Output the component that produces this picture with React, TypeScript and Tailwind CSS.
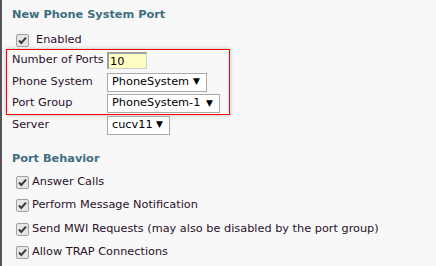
import React from "react";

const font = { fontFamily: '"DejaVu Sans", Verdana, sans-serif' };

function Check() {
  return (
    <svg width="13" height="13" viewBox="0 0 13 13" className="shrink-0">
      <rect x="0.5" y="0.5" width="12" height="12" rx="1.5" fill="#e6e6e6" stroke="#a0a0a0" />
      <path d="M3 6.5 L5.3 9 L10 3.6" fill="none" stroke="#3a3a3a" strokeWidth="2" />
    </svg>
  );
}

function Select({ label, w }: { label: string; w: string }) {
  return (
    <div className={`flex items-center justify-between h-[19px] bg-white border border-[#a9a9a9] pl-[4px] pr-[6px] text-black whitespace-nowrap ${w}`}>
      <span>{label}</span>
      <span className="text-[9px]">▼</span>
    </div>
  );
}

export default function App() {
  return (
    <div style={font} className="w-[436px] h-[266px] bg-[#f8f8f8] border-l-2 border-[#555] text-[11.3px] text-[#2a102a] overflow-hidden">
      <div className="pl-[10px] pt-[7px] font-bold text-[#3d6e80] leading-[16px]">New Phone System Port</div>
      <div className="flex items-center gap-[7px] pl-[14px] mt-[10px] h-[15px]">
        <Check />
        <span>Enabled</span>
      </div>
      <div className="ml-[4px] mt-[1px] w-[224px] border border-[#ff0000] shadow-[0_0_4px_rgba(0,0,0,0.25)] flex flex-col">
        <div className="flex items-center h-[21px]">
          <span className="w-[100px] pl-[5px] whitespace-nowrap">Number of Ports</span>
          <div className="w-[40px] h-[17px] bg-[#ffffc4] border-t-2 border-l-2 border-[#a0a0a0] border-b border-r border-b-[#d0d0d0] border-r-[#d0d0d0] text-black pl-[1px] leading-[15px]">10</div>
        </div>
        <div className="flex items-center h-[22px]">
          <span className="w-[100px] pl-[5px] whitespace-nowrap">Phone System</span>
          <Select label="PhoneSystem" w="w-[100px]" />
        </div>
        <div className="flex items-center h-[21px]">
          <span className="w-[100px] pl-[5px] whitespace-nowrap">Port Group</span>
          <Select label="PhoneSystem-1" w="w-[113px]" />
        </div>
      </div>
      <div className="flex items-center h-[20px]">
        <span className="w-[105px] pl-[10px]">Server</span>
        <Select label="cucv11" w="w-[63px]" />
      </div>
      <div className="pl-[10px] mt-[16px] font-bold text-[#3d6e80] leading-[16px]">Port Behavior</div>
      <div className="flex flex-col pl-[14px] mt-[8px] gap-[8px]">
        <div className="flex items-center gap-[3px] h-[15px]"><Check /><span>Answer Calls</span></div>
        <div className="flex items-center gap-[3px] h-[15.5px]"><Check /><span>Perform Message Notification</span></div>
        <div className="flex items-center gap-[3px] h-[15.5px]"><Check /><span>Send MWI Requests (may also be disabled by the port group)</span></div>
        <div className="flex items-center gap-[3px] h-[15px]"><Check /><span>Allow TRAP Connections</span></div>
      </div>
    </div>
  );
}
